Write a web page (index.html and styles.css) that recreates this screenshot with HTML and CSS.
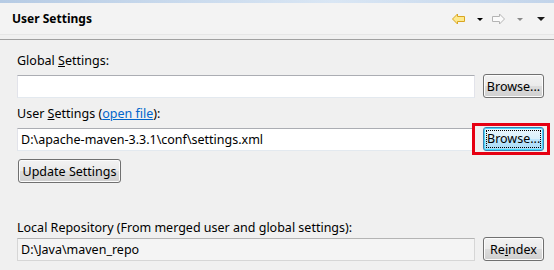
FILE: index.html
```html
<!DOCTYPE html>
<html lang="en">
<head>
    <meta charset="UTF-8">
    <title>User Settings</title>
    <link rel="stylesheet" href="styles.css">
</head>
<body>
    <div class="frame-top"></div>
    <div class="header">
        <h1>User Settings</h1>
        <div class="nav">
            <svg class="arrow" width="13" height="12" viewBox="0 0 13 12">
                <path d="M0.5 6 L5.5 1 L5.5 3.5 L12.5 3.5 L12.5 8.5 L5.5 8.5 L5.5 11 Z" fill="#fde98e" stroke="#d9a520"/>
            </svg>
            <span class="tri"></span>
            <svg class="arrow fwd" width="13" height="12" viewBox="0 0 13 12">
                <path d="M12.5 6 L7.5 1 L7.5 3.5 L0.5 3.5 L0.5 8.5 L7.5 8.5 L7.5 11 Z" fill="#fbfbfb" stroke="#b4b4b4"/>
            </svg>
            <span class="tri grey"></span>
            <span class="tri menu"></span>
        </div>
    </div>
    <div class="rule"></div>

    <div class="content">
        <div class="label">Global <u>S</u>ettings:</div>
        <div class="row">
            <input class="field" type="text" value="">
            <button class="btn">Browse...</button>
        </div>

        <div class="label">User <u>S</u>ettings (<a href="#">open file</a>):</div>
        <div class="row">
            <input class="field" type="text" value="D:\apache-maven-3.3.1\conf\settings.xml">
            <div class="marked">
                <button class="btn focused"><span>Browse...</span></button>
            </div>
        </div>

        <button class="btn update">Update Settings</button>

        <div class="label local">Local Repository (From merged user and global settings):</div>
        <div class="row last">
            <input class="field disabled" type="text" value="D:\Java\maven_repo" disabled>
            <button class="btn">Re<u>i</u>ndex</button>
        </div>
    </div>
</body>
</html>
```

FILE: styles.css
```css
body {
    margin: 0;
    background: #f0f0f0;
    font-family: "Noto Sans", "Open Sans", sans-serif;
    font-size: 12.5px;
    color: #000;
}

.frame-top {
    height: 3px;
    background: linear-gradient(to right, #b6cbe4, #d9e6f4 60%, #c2d4ea);
}

.header {
    height: 31px;
    display: flex;
    align-items: center;
    justify-content: space-between;
    padding: 0 9px 0 12px;
    background: #f3f3f3;
    border-bottom: 1px solid #e6e6e6;
}

h1 {
    margin: 0;
    font-size: 12px;
    font-weight: bold;
}

.nav {
    display: flex;
    align-items: center;
}

.arrow {
    display: block;
}

.tri {
    width: 0;
    height: 0;
    margin: 1px 9px 0 12px;
    border-left: 3px solid transparent;
    border-right: 3px solid transparent;
    border-top: 3px solid #000;
}

.tri.grey {
    border-top-color: #8a8a8a;
    margin-right: 14px;
}

.tri.menu {
    margin: 1px 0 0;
    border-left-width: 4px;
    border-right-width: 4px;
    border-top-width: 4px;
    border-top-color: #1a1a1a;
}

.rule {
    height: 1px;
    margin-top: 4px;
    background: #a0a0a0;
}

.content {
    padding: 12px 10px 0 17px;
}

.label {
    padding-top: 1px;
    line-height: 16px;
}

.label a {
    color: #0066cc;
}

.row {
    display: flex;
    align-items: center;
    gap: 8px;
    margin: 5px 0 7px;
    height: 24px;
}

.field {
    flex: 1;
    height: 23px;
    box-sizing: border-box;
    margin: 0;
    padding: 0 3px;
    font: inherit;
    color: #000;
    background: #fff;
    border: 1px solid #e2e3ea;
    border-top-color: #abadb3;
    border-bottom-color: #e3e9ef;
    outline: none;
}

.field.disabled {
    background: #f4f4f4;
    color: #000;
    border-color: #d6d6d6;
    border-top-color: #b4b4b4;
}

.btn {
    width: 61px;
    height: 24px;
    box-sizing: border-box;
    margin: 0;
    padding: 0;
    font: inherit;
    color: #000;
    border: 1px solid #707070;
    border-radius: 3px;
    background: linear-gradient(#f2f2f2 0%, #ebebeb 49%, #dddddd 50%, #cfcfcf 100%);
    box-shadow: inset 0 0 0 1px #fcfcfc;
    cursor: pointer;
}

.marked {
    position: relative;
    margin-left: 1px;
}

.marked::after {
    content: "";
    position: absolute;
    left: -11px;
    top: -4px;
    right: -6px;
    bottom: -4px;
    border: 3px solid #e60012;
}

.btn.focused {
    display: block;
    border-color: #3c7fb1;
    background: linear-gradient(#eaf6fd 0%, #d9f0fc 49%, #bee6fd 50%, #a7d9f5 100%);
    box-shadow: inset 0 0 0 1px #48d8fb;
}

.btn.focused span {
    display: block;
    margin: 2px;
    line-height: 16px;
    border: 1px dotted #000;
}

.btn.update {
    width: 103px;
    margin-left: 1px;
    margin-top: 1px;
}

.label.local {
    margin-top: 36px;
}

.row.last {
    margin-top: 1px;
}
```
